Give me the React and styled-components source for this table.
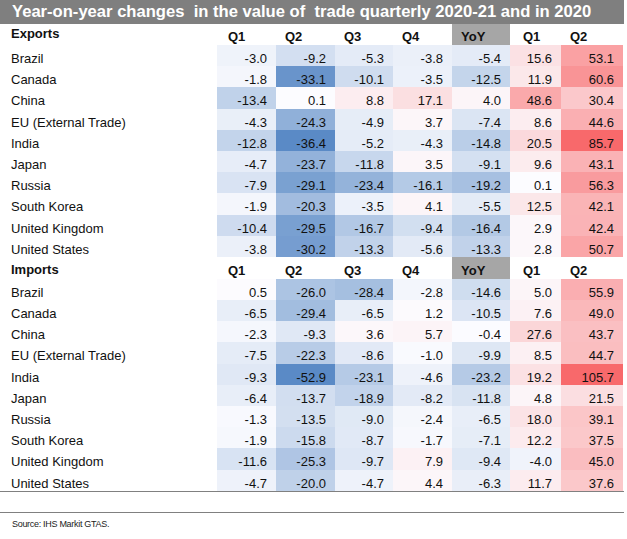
import React from 'react';
import styled, { createGlobalStyle } from 'styled-components';

const GlobalStyle = createGlobalStyle`
	body {
		margin: 0;
		background: #fff;
		font-family: 'Liberation Sans', Arial, sans-serif;
		color: #000;
	}
`;

const COLS = ['Q1', 'Q2', 'Q3', 'Q4', 'YoY', 'Q1', 'Q2'];

const exportsData = [
	['Brazil', -3.0, -9.2, -5.3, -3.8, -5.4, 15.6, 53.1],
	['Canada', -1.8, -33.1, -10.1, -3.5, -12.5, 11.9, 60.6],
	['China', -13.4, 0.1, 8.8, 17.1, 4.0, 48.6, 30.4],
	['EU (External Trade)', -4.3, -24.3, -4.9, 3.7, -7.4, 8.6, 44.6],
	['India', -12.8, -36.4, -5.2, -4.3, -14.8, 20.5, 85.7],
	['Japan', -4.7, -23.7, -11.8, 3.5, -9.1, 9.6, 43.1],
	['Russia', -7.9, -29.1, -23.4, -16.1, -19.2, 0.1, 56.3],
	['South Korea', -1.9, -20.3, -3.5, 4.1, -5.5, 12.5, 42.1],
	['United Kingdom', -10.4, -29.5, -16.7, -9.4, -16.4, 2.9, 42.4],
	['United States', -3.8, -30.2, -13.3, -5.6, -13.3, 2.8, 50.7],
];

const importsData = [
	['Brazil', 0.5, -26.0, -28.4, -2.8, -14.6, 5.0, 55.9],
	['Canada', -6.5, -29.4, -6.5, 1.2, -10.5, 7.6, 49.0],
	['China', -2.3, -9.3, 3.6, 5.7, -0.4, 27.6, 43.7],
	['EU (External Trade)', -7.5, -22.3, -8.6, -1.0, -9.9, 8.5, 44.7],
	['India', -9.3, -52.9, -23.1, -4.6, -23.2, 19.2, 105.7],
	['Japan', -6.4, -13.7, -18.9, -8.2, -11.8, 4.8, 21.5],
	['Russia', -1.3, -13.5, -9.0, -2.4, -6.5, 18.0, 39.1],
	['South Korea', -1.9, -15.8, -8.7, -1.7, -7.1, 12.2, 37.5],
	['United Kingdom', -11.6, -25.3, -9.7, 7.9, -9.4, -4.0, 45.0],
	['United States', -4.7, -20.0, -4.7, 4.4, -6.3, 11.7, 37.6],
];

// excel style 3 colour scale, white at zero
const MID = [252, 252, 255];
const BLUE = [90, 138, 198];
const RED = [248, 105, 107];

const heat = (v, min, max) => {
	const t = v < 0 ? v / min : v / max;
	const end = v < 0 ? BLUE : RED;
	const c = MID.map((m, i) => Math.round(m + (end[i] - m) * t));
	return `rgb(${c.join(',')})`;
};

const Page = styled.div`
	width: 627px;
	height: 539px;
	overflow: hidden;
	background: #fff;
`;

const TitleBar = styled.div`
	width: 624px;
	height: 24px;
	box-sizing: border-box;
	padding-left: 12px;
	background: #7f7f7f;
	color: #fff;
	font-weight: bold;
	font-size: 16.6px;
	line-height: 24px;
	white-space: pre;
	overflow: hidden;
`;

const Grid = styled.div`
	display: grid;
	grid-template-columns: 217px 59px 59px 58px 59px 58px 51px 62px;
	width: 623px;
`;

const Head = styled.div`
	height: ${p => p.$h}px;
	box-sizing: border-box;
	padding: ${p => p.$pt}px 0 0 ${p => p.$pl}px;
	font-weight: bold;
	font-size: 13px;
	line-height: 13px;
	background: ${p => (p.$shade ? '#a6a6a6' : 'transparent')};
	color: #111;
`;

const Label = styled.div`
	height: 21.2px;
	box-sizing: border-box;
	padding: 7px 0 0 11px;
	font-size: 13px;
	line-height: 13px;
	color: #111;
`;

const Cell = styled.div`
	height: 21.2px;
	box-sizing: border-box;
	padding: 7px 9px 0 0;
	text-align: right;
	font-size: 13px;
	line-height: 13px;
	background: ${p => p.$bg};
	color: #111;
`;

const Rule = styled.div`
	width: 624px;
	height: 1px;
	background: #808080;
	margin-top: ${p => p.$mt || 0}px;
`;

const Source = styled.div`
	padding: 6px 0 0 12px;
	font-size: 9px;
	letter-spacing: -0.3px;
	color: #222;
`;

const padFor = i => (i === 5 ? 13 : i === 0 ? 11 : 9);

const Section = ({ title, rows, h, pt, labelPt }) => {
	const vals = rows.flatMap(r => r.slice(1));
	const min = Math.min(...vals);
	const max = Math.max(...vals);
	return (
		<>
			<Head $h={h} $pt={labelPt} $pl={11}>{title}</Head>
			{COLS.map((c, i) => (
				<Head key={i} $h={h} $pt={pt} $pl={padFor(i)} $shade={c === 'YoY'}>{c}</Head>
			))}
			{rows.map(r => (
				<React.Fragment key={r[0]}>
					<Label>{r[0]}</Label>
					{r.slice(1).map((v, i) => (
						<Cell key={i} $bg={heat(v, min, max)}>{v.toFixed(1)}</Cell>
					))}
				</React.Fragment>
			))}
		</>
	);
};

const App = () => (
	<Page>
		<GlobalStyle />
		<TitleBar>{'Year-on-year changes  in the value of  trade quarterly 2020-21 and in 2020'}</TitleBar>
		<Grid>
			<Section title="Exports" rows={exportsData} h={21} pt={6} labelPt={3} />
			<Section title="Imports" rows={importsData} h={22} pt={7} labelPt={6} />
		</Grid>
		<Rule />
		<Rule $mt={20} />
		<Source>Source: IHS Markit GTAS.</Source>
	</Page>
);

export default App;
